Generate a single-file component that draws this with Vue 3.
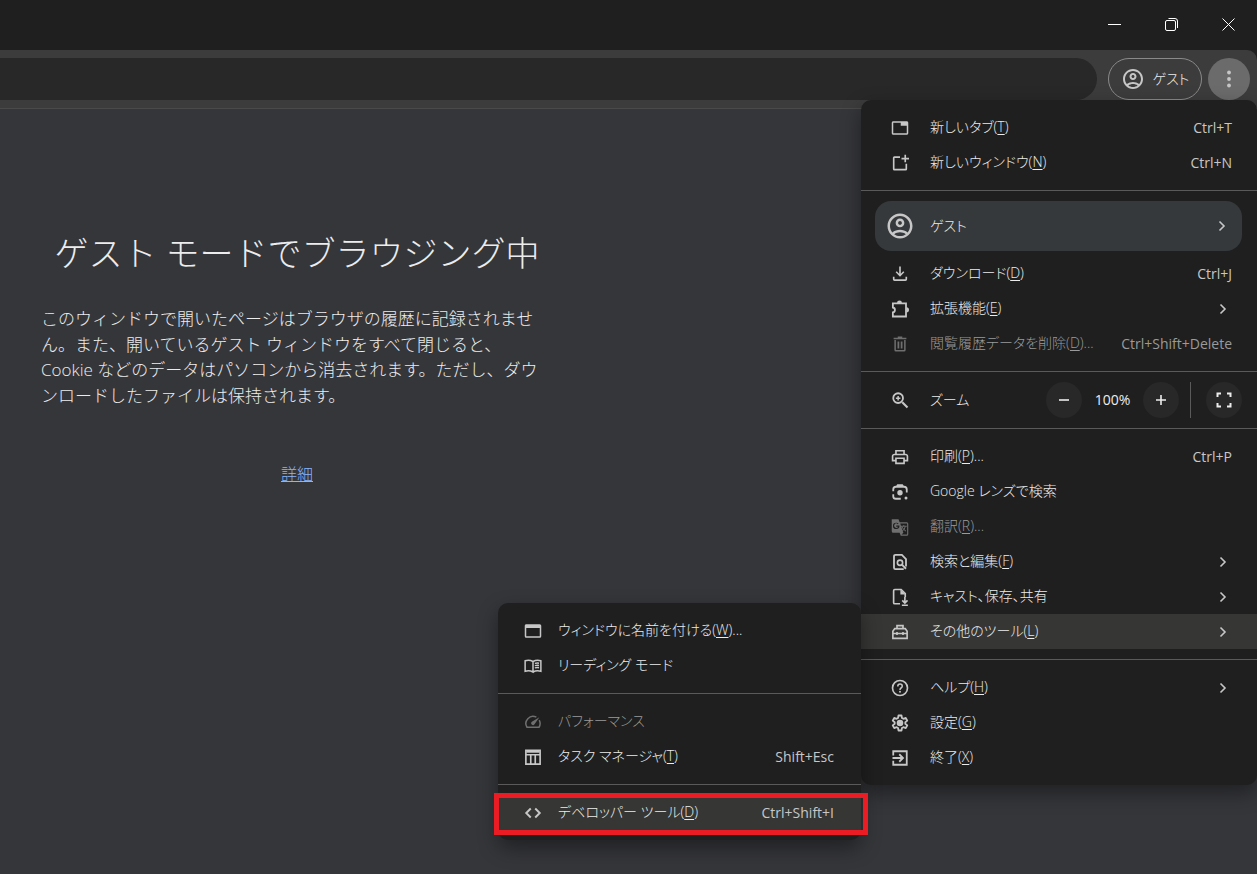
<script setup>
const icons = {
  tab: '<path d="M21 3H3c-1.1 0-2 .9-2 2v14c0 1.100.9 2 2 2h18c1.100 0 2-.9 2-2V5c0-1.100-.9-2-2-2zm0 16H3V5h10v4h8v10z"/>',
  newWindow: '<path d="M12 3v2.200H4.700v14.600h14.600V13h2.200v7a2 2 0 0 1-2 2h-15a2 2 0 0 1-2-2V5a2 2 0 0 1 2-2zM17.900 1h2.200v4H24v2.200h-3.900V11h-2.200V7.200H14V5h3.900z"/>',
  person: '<path d="M12 2C6.480 2 2 6.480 2 12s4.480 10 10 10 10-4.480 10-10S17.520 2 12 2zM7.350 18.500C8.660 17.560 10.260 17 12 17s3.340.56 4.650 1.500C15.340 19.440 13.740 20 12 20s-3.340-.56-4.650-1.500zm10.790-1.380C16.450 15.800 14.320 15 12 15s-4.450.8-6.140 2.120C4.700 15.730 4 13.950 4 12c0-4.420 3.580-8 8-8s8 3.580 8 8c0 1.950-.7 3.730-1.860 5.120zM12 6c-1.930 0-3.500 1.570-3.500 3.500S10.070 13 12 13s3.500-1.570 3.500-3.500S13.930 6 12 6zm0 5c-.83 0-1.500-.67-1.500-1.500S11.170 8 12 8s1.500.67 1.500 1.500S12.830 11 12 11z"/>',
  download: '<path d="M10.900 2h2.200v9.500l3.200-3.200 1.500 1.500L12 15.800 6.200 9.800l1.500-1.500 3.200 3.200zM2.500 15.500h2.200V19h14.600v-3.500h2.200V19a2.200 2.200 0 0 1-2.200 2.200H4.700A2.200 2.200 0 0 1 2.500 19z"/>',
  extension: '<path fill="none" stroke="currentColor" stroke-width="2.400" d="M2.500 4.500H20v7.500V22H2.500v-5.500a3.300 3.300 0 0 0 0-6.500z"/><path d="M8 4a3.300 3.300 0 0 1 6.600 0zM20.500 9.500a3.300 3.300 0 0 1 0 7z"/>',
  trash: '<path fill-rule="evenodd" d="M9 2h6v1.500h5.500v2H3.500v-2H9zM4.500 6.500h15V20a2 2 0 0 1-2 2h-11a2 2 0 0 1-2-2zm2 0V20h11V6.500zM8.700 8.500h2.300v9.500H8.700zm4.300 0h2.300v9.500H13z"/>',
  zoom: '<path fill="none" stroke="currentColor" stroke-width="2.800" d="M15 15l7 7"/><circle cx="9.500" cy="9.500" r="6.500" fill="none" stroke="currentColor" stroke-width="2.400"/><path fill="none" stroke="currentColor" stroke-width="2" d="M6.500 9.500h6M9.500 6.500v6"/>',
  print: '<path d="M19.500 7.500H18.500V2.500h-13v5H4.500c-1.900 0-3.500 1.500-3.500 3.500v7h4.500v3.500h13V18H23v-7c0-2-1.600-3.500-3.500-3.500zM7.700 4.700h8.600v2.800H7.700zm8.600 14.600H7.700v-4.600h8.600zm4.500-3.500h-2.300v-3.300h-13v3.300H3.200V11c0-.7.600-1.300 1.300-1.300h15c.7 0 1.300.6 1.300 1.300z"/>',
  lens: '<path fill="none" stroke="currentColor" stroke-width="2.400" d="M3 11V8.500q0-3.500 3.500-3.500h11Q21 5 21 8.500v4M3 15v2.500Q3 21 6.500 21H13M8 4l1-1.200h6L16 4"/><circle cx="12" cy="13" r="3.600"/><circle cx="20" cy="20" r="2"/>',
  translate: '<path fill-rule="evenodd" d="M1 1.500h9l1.500 4H21a2 2 0 0 1 2 2v14a2 2 0 0 1-2 2h-8l-1.500-4H3a2 2 0 0 1-2-2zM7 6.200a4.300 4.300 0 1 0 4.200 3.800H7v1.500h2.500A2.800 2.800 0 1 1 9 8.200l1.100-1A4.300 4.300 0 0 0 7 6.200zM12.300 7.200l4.200 12.300-2.500 2.500h7.500v-14.800z"/><path fill="none" stroke="currentColor" stroke-width="1.300" d="M13 11h8M17 9.500V11M14.500 11.500q1.500 4 5.500 6M19 11.500q-1 4-4 6"/>',
  find: '<path fill="none" stroke="currentColor" stroke-width="2.400" d="M20 18V8l-5.500-5.500H6q-2 0-2 2v15q0 2 2 2h11"/><circle cx="12" cy="13" r="3.500" fill="none" stroke="currentColor" stroke-width="2.200"/><path fill="none" stroke="currentColor" stroke-width="2.600" d="M14.500 15.500l5.500 5.500"/>',
  save: '<path fill="none" stroke="currentColor" stroke-width="2.200" d="M12 21H5Q3.500 21 3.500 19.500V3.500Q3.500 2 5 2h8.500L19 7.500V12M18.500 12v7.500M15 16.500l3.500 3.500 3.500-3.500M14.500 23h8"/><path d="M12.500 2v6.500H19z"/>',
  toolbox: '<path fill="none" stroke="currentColor" stroke-width="2.200" d="M2.500 20.500V11L5 7.500h14l2.500 3.500v9.500zM8 7V3.500h8V7M3 14h18M8 12v4M16 12v4"/>',
  help: '<circle cx="12" cy="12" r="10" fill="none" stroke="currentColor" stroke-width="2.200"/><path fill="none" stroke="currentColor" stroke-width="2" d="M9 10q0-3.200 3-3.200t3 2.800q0 1.400-1.600 2.400Q12 12.900 12 14.500"/><circle cx="12" cy="17" r="1.300"/>',
  settings: '<path fill="none" stroke="currentColor" stroke-width="2.400" stroke-linejoin="round" d="M10 2h4l.6 3.300 1.900 1.100 3.200-1.100 2 3.500-2.600 2.200v2l2.600 2.200-2 3.500-3.200-1.100-1.900 1.100L14 22h-4l-.6-3.300-1.900-1.100-3.200 1.100-2-3.500L4.900 13v-2L2.300 8.800l2-3.500 3.200 1.100 1.900-1.100z"/><circle cx="12" cy="12" r="4.400"/>',
  exit: '<path fill="none" stroke="currentColor" stroke-width="2.400" d="M3 8.500V3h18v18H3v-5.500M2 12h13.500M11 7l5 5-5 5"/>',
  window: '<path d="M3 3h18a2 2 0 0 1 2 2v14a2 2 0 0 1-2 2H3a2 2 0 0 1-2-2V5c0-1.100.9-2 2-2zm0 5v11h18V8z"/>',
  book: '<path fill="none" stroke="currentColor" stroke-width="2" d="M12 6v14Q7 17 1.500 19V5Q7 3 12 6Q17 3 22.500 5v14Q17 17 12 20M14.500 8.500q3-.8 5.500-.3M14.500 11.500q3-.8 5.500-.3M14.500 14.500q3-.8 5.500-.3"/>',
  speed: '<path fill="none" stroke="currentColor" stroke-width="2" d="M16.500 5.600A9.500 9.500 0 0 0 4 19h16a9.500 9.500 0 0 0 .3-9.500"/><path d="M20.500 5.500L14 15a2.500 2.500 0 1 1-3.500-3.500z"/>',
  table: '<path fill="none" stroke="currentColor" stroke-width="2.200" d="M2.500 3h19v18.500h-19zM2.500 9h19M9 9v12M15 9v12"/><path d="M3 3.500h18v2.800H3z"/>',
  code: '<path fill="none" stroke="currentColor" stroke-width="2.600" d="M9 6l-6 6 6 6M15 6l6 6-6 6"/>'
}

const mainGroups = [
  [
    { icon: 'tab', label: '新しいタブ', key: 'T', shortcut: 'Ctrl+T' },
    { icon: 'newWindow', label: '新しいウィンドウ', key: 'N', shortcut: 'Ctrl+N' }
  ],
  [
    { icon: 'person', label: 'ゲスト', arrow: true, profile: true },
    { icon: 'download', label: 'ダウンロード', key: 'D', shortcut: 'Ctrl+J' },
    { icon: 'extension', label: '拡張機能', key: 'E', arrow: true },
    { icon: 'trash', label: '閲覧履歴データを削除', key: 'D', more: true, shortcut: 'Ctrl+Shift+Delete', disabled: true }
  ],
  [{ icon: 'zoom', label: 'ズーム', zoom: true }],
  [
    { icon: 'print', label: '印刷', key: 'P', more: true, shortcut: 'Ctrl+P' },
    { icon: 'lens', label: 'Google レンズで検索' },
    { icon: 'translate', label: '翻訳', key: 'R', more: true, disabled: true },
    { icon: 'find', label: '検索と編集', key: 'F', arrow: true },
    { icon: 'save', label: 'キャスト、保存、共有', arrow: true },
    { icon: 'toolbox', label: 'その他のツール', key: 'L', arrow: true, active: true }
  ],
  [
    { icon: 'help', label: 'ヘルプ', key: 'H', arrow: true },
    { icon: 'settings', label: '設定', key: 'G' },
    { icon: 'exit', label: '終了', key: 'X' }
  ]
]

const toolGroups = [
  [
    { icon: 'window', label: 'ウィンドウに名前を付ける', key: 'W', more: true },
    { icon: 'book', label: 'リーディング モード' }
  ],
  [
    { icon: 'speed', label: 'パフォーマンス', disabled: true },
    { icon: 'table', label: 'タスク マネージャ', key: 'T', shortcut: 'Shift+Esc' }
  ],
  [{ icon: 'code', label: 'デベロッパー ツール', key: 'D', shortcut: 'Ctrl+Shift+I', active: true }]
]

const menus = [
  { name: 'main-menu', title: 'メニュー', groups: mainGroups },
  { name: 'tools-menu', title: 'その他のツール', groups: toolGroups }
]
</script>

<template>
  <div class="browser">
    <header class="titlebar">
      <button class="caption" aria-label="最小化">
        <svg viewBox="0 0 14 14"><path d="M0 6.500h13" /></svg>
      </button>
      <button class="caption" aria-label="元に戻す">
        <svg viewBox="0 0 14 14"><rect x=".5" y="2.500" width="10" height="10" rx="1.500" /><path d="M3.500.500H10q2.500 0 2.500 2.500V10" /></svg>
      </button>
      <button class="caption" aria-label="閉じる">
        <svg viewBox="0 0 14 14"><path d="M.5.500l12 12M12.500.500l-12 12" /></svg>
      </button>
    </header>

    <div class="toolbar">
      <input class="omnibox" type="text" aria-label="アドレスバー" />
      <button class="profile-chip">
        <svg class="chip-icon" viewBox="0 0 24 24" v-html="icons.person"></svg>
        <span class="chip-label">ゲスト</span>
      </button>
      <button class="kebab" aria-label="メニュー">
        <svg viewBox="0 0 20 20"><circle cx="10" cy="3.500" r="1.900" /><circle cx="10" cy="10" r="1.900" /><circle cx="10" cy="16.500" r="1.900" /></svg>
      </button>
    </div>

    <main class="page">
      <section class="guest">
        <h1>ゲスト モードでブラウジング中</h1>
        <p>このウィンドウで開いたページはブラウザの履歴に記録されません。また、開いているゲスト ウィンドウをすべて閉じると、Cookie などのデータはパソコンから消去されます。ただし、ダウンロードしたファイルは保持されます。</p>
        <a href="#">詳細</a>
      </section>
    </main>

    <nav v-for="menu in menus" :key="menu.name" class="menu" :class="menu.name" :aria-label="menu.title">
      <div v-for="(group, g) in menu.groups" :key="g" class="group">
        <template v-for="item in group" :key="item.label">
          <div v-if="item.zoom" class="zoom-row">
            <span class="icon"><svg viewBox="0 0 24 24" v-html="icons[item.icon]"></svg></span>
            <span class="label">{{ item.label }}</span>
            <button class="round" aria-label="縮小"><svg viewBox="0 0 12 12"><path d="M1 6h10" /></svg></button>
            <span class="percent">100%</span>
            <button class="round" aria-label="拡大"><svg viewBox="0 0 12 12"><path d="M1 6h10M6 1v10" /></svg></button>
            <span class="divider"></span>
            <button class="round full" aria-label="全画面表示"><svg viewBox="0 0 16 16"><path d="M1.500 5V1.500H5M11 1.500h3.500V5M14.500 11v3.500H11M5 14.500H1.500V11" /></svg></button>
          </div>
          <button v-else class="item" :class="{ active: item.active, profile: item.profile }" :disabled="item.disabled">
            <span class="icon"><svg viewBox="0 0 24 24" v-html="icons[item.icon]"></svg></span>
            <span class="label">{{ item.label }}<template v-if="item.key">(<u>{{ item.key }}</u>)</template><template v-if="item.more">...</template></span>
            <span v-if="item.shortcut" class="shortcut">{{ item.shortcut }}</span>
            <svg v-if="item.arrow" class="arrow" viewBox="0 0 8 12"><path d="M1.500 1.500L6 6l-4.500 4.500" /></svg>
          </button>
        </template>
      </div>
    </nav>
    <div class="highlight"></div>
  </div>
</template>

<style>
body {
  margin: 0;
  background: #35363a;
}
</style>

<style scoped>
.browser {
  position: relative;
  display: flex;
  flex-direction: column;
  min-height: 100vh;
  overflow: hidden;
  background: #1f1f1f;
  color: #ececec;
  font-family: "Open Sans", "Noto Sans CJK JP", sans-serif;
  font-weight: 300;
}
button {
  margin: 0;
  padding: 0;
  border: 0;
  background: none;
  color: inherit;
  font: inherit;
  text-align: left;
}
svg {
  display: block;
  fill: currentColor;
}
.titlebar {
  display: flex;
  justify-content: flex-end;
  height: 50px;
}
.caption {
  display: flex;
  align-items: center;
  justify-content: center;
  width: 57px;
  color: #fff;
}
.caption svg {
  width: 14px;
  height: 14px;
  fill: none;
  stroke: currentColor;
  stroke-width: 1;
}
.toolbar {
  display: flex;
  align-items: center;
  box-sizing: border-box;
  height: 58px;
  padding: 0 7px 0 0;
  border-radius: 0 10px 0 0;
  background: #3c3c3c;
}
.omnibox {
  flex: 1;
  min-width: 0;
  box-sizing: border-box;
  height: 42px;
  border: 0;
  border-radius: 0 21px 21px 0;
  background: #282828;
  color: inherit;
  font: inherit;
}
.profile-chip {
  display: flex;
  align-items: center;
  justify-content: center;
  gap: 8px;
  box-sizing: border-box;
  width: 94px;
  height: 42px;
  margin: 0 6px 0 11px;
  border: 1px solid #8a8a8a;
  border-radius: 21px;
  font-size: 14px;
}
.chip-label {
  padding-bottom: 2px;
  font-feature-settings: "palt";
}
.chip-icon {
  width: 24px;
  height: 24px;
  color: #c7c7c7;
}
.kebab {
  display: flex;
  align-items: center;
  justify-content: center;
  width: 42px;
  height: 42px;
  border-radius: 50%;
  background: #6b6b6b;
  color: #c7c7c7;
}
.kebab svg {
  width: 20px;
  height: 20px;
}
.page {
  flex: 1;
  border-top: 1px solid #4a4a4a;
  background: #35363a;
}
.guest {
  display: flex;
  flex-direction: column;
  align-items: center;
  width: 512px;
  margin: 118px 0 0 41px;
}
h1 {
  margin: 0;
  font-size: 34px;
  line-height: 52px;
  font-weight: 300;
  white-space: nowrap;
}
p {
  margin: 27px 0 0;
  font-size: 17px;
  line-height: 1.5;
}
.guest a {
  margin-top: 53px;
  color: #8ab4f8;
  font-size: 16px;
  line-height: 26px;
}
.menu {
  position: absolute;
  background: #1f1f1f;
  font-size: 14px;
  box-shadow: 0 8px 20px rgba(0, 0, 0, 0.4);
}
.main-menu {
  top: 100px;
  right: 0;
  width: 396px;
  border-radius: 10px;
}
.tools-menu {
  top: 603px;
  right: 396px;
  width: 363px;
  border-radius: 10px;
}
.group {
  padding: 10px 0;
}
.group + .group {
  border-top: 1px solid #5a5a5a;
}
.item,
.zoom-row {
  display: flex;
  align-items: center;
  box-sizing: border-box;
  width: 100%;
  height: 35px;
  padding: 0 25px 0 26px;
}
.tools-menu .item {
  padding: 0 27px 0 22px;
}
.zoom-row {
  height: 36px;
  padding-right: 15px;
}
.icon {
  display: flex;
  flex: none;
  justify-content: center;
  width: 26px;
  margin-right: 17px;
  color: #c7c7c7;
}
.tools-menu .icon {
  margin-right: 12px;
}
.icon svg {
  width: 18px;
  height: 18px;
}
.label {
  flex: 1;
  padding-bottom: 3px;
  white-space: nowrap;
  font-feature-settings: "palt";
}
.shortcut,
.percent {
  padding-bottom: 1px;
  font-weight: 400;
}
.shortcut {
  color: #c7c7c7;
}
u {
  text-underline-offset: 2px;
}
.item:disabled,
.item:disabled .shortcut {
  color: #9a9a9a;
}
.item:disabled .icon {
  color: #6f6f6f;
}
.item.active {
  background: #363635;
}
.item.profile {
  width: auto;
  min-width: 367px;
  height: 50px;
  margin: 0 14px 5px;
  padding: 0 16px 0 12px;
  border-radius: 16px;
  background: #35393b;
}
.profile .icon svg {
  width: 30px;
  height: 30px;
  margin: 0 -2px;
}
.arrow {
  width: 8px;
  height: 12px;
  margin-right: 5px;
  fill: none;
  stroke: #c7c7c7;
  stroke-width: 1.6;
}
.profile .arrow {
  margin-right: 0;
}
.round {
  display: flex;
  align-items: center;
  justify-content: center;
  width: 36px;
  height: 36px;
  border-radius: 50%;
  background: #282828;
}
.round svg {
  width: 12px;
  height: 12px;
  fill: none;
  stroke: currentColor;
  stroke-width: 1.6;
}
.round.full svg {
  width: 16px;
  height: 16px;
  stroke-width: 2;
}
.percent {
  width: 61px;
  text-align: center;
}
.divider {
  width: 1px;
  height: 36px;
  margin: 0 15px 0 11px;
  background: #5a5a5a;
}
.highlight {
  position: absolute;
  top: 793px;
  right: 389px;
  box-sizing: border-box;
  width: 374px;
  height: 42px;
  border: 5px solid #ec1c24;
  pointer-events: none;
}
</style>
